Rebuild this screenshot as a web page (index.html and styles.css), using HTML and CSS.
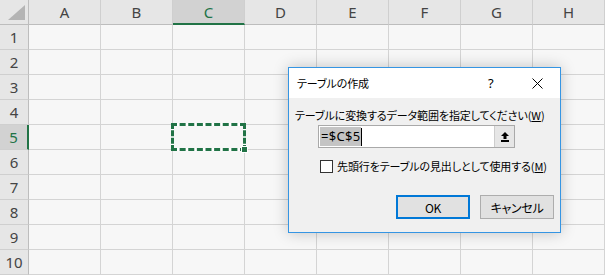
FILE: index.html
```html
<!DOCTYPE html>
<html lang="ja">
<head>
    <meta charset="UTF-8">
    <title>テーブルの作成</title>
    <link rel="stylesheet" href="styles.css">
</head>
<body>
    <div class="sheet">
        <div class="corner"><span class="corner-tri"></span></div>
        <div class="col-head">A</div>
        <div class="col-head">B</div>
        <div class="col-head active">C</div>
        <div class="col-head">D</div>
        <div class="col-head">E</div>
        <div class="col-head">F</div>
        <div class="col-head">G</div>
        <div class="col-head">H</div>

        <div class="row-head">1</div><div class="cell"></div><div class="cell"></div><div class="cell"></div><div class="cell"></div><div class="cell"></div><div class="cell"></div><div class="cell"></div><div class="cell"></div>
        <div class="row-head">2</div><div class="cell"></div><div class="cell"></div><div class="cell"></div><div class="cell"></div><div class="cell"></div><div class="cell"></div><div class="cell"></div><div class="cell"></div>
        <div class="row-head">3</div><div class="cell"></div><div class="cell"></div><div class="cell"></div><div class="cell"></div><div class="cell"></div><div class="cell"></div><div class="cell"></div><div class="cell"></div>
        <div class="row-head">4</div><div class="cell"></div><div class="cell"></div><div class="cell"></div><div class="cell"></div><div class="cell"></div><div class="cell"></div><div class="cell"></div><div class="cell"></div>
        <div class="row-head active">5</div><div class="cell"></div><div class="cell"></div>
        <div class="cell selected">
            <div class="marquee"><div class="marquee-inner"></div></div>
            <span class="handle"></span>
        </div>
        <div class="cell"></div><div class="cell"></div><div class="cell"></div><div class="cell"></div><div class="cell"></div>
        <div class="row-head">6</div><div class="cell"></div><div class="cell"></div><div class="cell"></div><div class="cell"></div><div class="cell"></div><div class="cell"></div><div class="cell"></div><div class="cell"></div>
        <div class="row-head">7</div><div class="cell"></div><div class="cell"></div><div class="cell"></div><div class="cell"></div><div class="cell"></div><div class="cell"></div><div class="cell"></div><div class="cell"></div>
        <div class="row-head">8</div><div class="cell"></div><div class="cell"></div><div class="cell"></div><div class="cell"></div><div class="cell"></div><div class="cell"></div><div class="cell"></div><div class="cell"></div>
        <div class="row-head">9</div><div class="cell"></div><div class="cell"></div><div class="cell"></div><div class="cell"></div><div class="cell"></div><div class="cell"></div><div class="cell"></div><div class="cell"></div>
        <div class="row-head">10</div><div class="cell"></div><div class="cell"></div><div class="cell"></div><div class="cell"></div><div class="cell"></div><div class="cell"></div><div class="cell"></div><div class="cell"></div>
    </div>

    <div class="dialog">
        <div class="dialog-title">
            <span class="title-text">テーブルの作成</span>
            <span class="title-help">?</span>
            <span class="title-close">
                <svg width="11" height="11" viewBox="0 0 11 11">
                    <path d="M0.5 0.5 L10.5 10.5 M10.5 0.5 L0.5 10.5" stroke="#000" stroke-width="1" fill="none"/>
                </svg>
            </span>
        </div>
        <div class="dialog-body">
            <div class="prompt">テーブルに変換するデータ範囲を指定してください(<u>W</u>)</div>
            <div class="range-box">
                <div class="range-input"><span class="range-sel">=$C$5</span><span class="caret"></span></div>
                <div class="range-btn">
                    <svg width="8" height="10" viewBox="0 0 8 10">
                        <path d="M4 0 L8 4 L5.5 4 L5.5 7 L2.5 7 L2.5 4 L0 4 Z" fill="#000"/>
                        <rect x="0" y="8" width="8" height="2" fill="#000"/>
                    </svg>
                </div>
            </div>
            <label class="check-row">
                <span class="checkbox"></span>
                <span>先頭行をテーブルの見出しとして使用する(<u>M</u>)</span>
            </label>
            <div class="buttons">
                <button class="btn primary">OK</button>
                <button class="btn">キャンセル</button>
            </div>
        </div>
    </div>
</body>
</html>
```

FILE: styles.css
```css
body {
    margin: 0;
    background: #f7f7f7;
    font-family: "Noto Sans", "Liberation Sans", sans-serif;
    overflow: hidden;
}

.sheet {
    display: grid;
    grid-template-columns: 29px repeat(8, 72px);
    grid-template-rows: 25px repeat(10, 25px);
    width: 605px;
}

.sheet > div {
    box-sizing: border-box;
}

.corner {
    background: #e6e6e6;
    border-right: 1px solid #bdbdbd;
    border-bottom: 1px solid #bdbdbd;
    position: relative;
}

.corner-tri {
    position: absolute;
    left: 8px;
    top: 5px;
    width: 17px;
    height: 15px;
    background: #b4b4b4;
    clip-path: polygon(100% 0, 100% 100%, 0 100%);
}

.col-head {
    background: #e6e6e6;
    border-right: 1px solid #cfcfcf;
    border-bottom: 1px solid #bdbdbd;
    color: #444;
    font-size: 15px;
    display: flex;
    align-items: center;
    justify-content: center;
}

.col-head.active {
    background: #d2d2d2;
    color: #217346;
    border-bottom: 2px solid #217346;
}

.row-head {
    background: #e6e6e6;
    border-right: 1px solid #bdbdbd;
    border-bottom: 1px solid #cfcfcf;
    color: #444;
    font-size: 15px;
    display: flex;
    align-items: center;
    justify-content: center;
}

.row-head.active {
    background: #d2d2d2;
    color: #217346;
    border-right: 2px solid #217346;
}

.cell {
    border-right: 1px solid #d4d4d4;
    border-bottom: 1px solid #d4d4d4;
}

.cell.selected {
    position: relative;
}

.marquee {
    position: absolute;
    left: -2px;
    top: -2px;
    right: -2px;
    bottom: -2px;
    border: 3px dashed #217346;
    background: #fff;
}

.marquee-inner {
    width: 100%;
    height: 100%;
    background: #f7f7f7;
}

.handle {
    position: absolute;
    right: -4px;
    bottom: -4px;
    width: 5px;
    height: 5px;
    background: #217346;
    border: 1px solid #fff;
}

.dialog {
    position: absolute;
    left: 288px;
    top: 67px;
    width: 273px;
    height: 166px;
    box-sizing: border-box;
    border: 1px solid #3595e3;
    background: #f0f0f0;
    box-shadow: 0 0 14px rgba(0, 0, 0, 0.22);
    font-family: "Noto Sans CJK JP", "Noto Sans", sans-serif;
    font-size: 11px;
    letter-spacing: -0.1px;
    font-feature-settings: "palt";
    color: #000;
    display: flex;
    flex-direction: column;
    white-space: nowrap;
}

.dialog-title {
    height: 30px;
    background: #fff;
    display: flex;
    align-items: center;
    padding-left: 8px;
}

.title-text {
    flex: 1;
}

.title-help {
    width: 14px;
    margin-right: 30px;
    font-family: "Noto Sans", sans-serif;
    font-size: 13px;
}

.title-close {
    width: 11px;
    height: 11px;
    margin-right: 17px;
    display: flex;
}

.dialog-body {
    flex: 1;
    padding: 10px 0 0 6px;
    display: flex;
    flex-direction: column;
}

.prompt {
    line-height: 14px;
}

.range-box {
    margin: 3px 0 0 23px;
    width: 197px;
    height: 23px;
    box-sizing: border-box;
    border: 1px solid #a9a9a9;
    background: #fff;
    display: flex;
}

.range-input {
    flex: 1;
    display: flex;
    align-items: center;
    padding-left: 1px;
}

.range-sel {
    background: #c4c4c4;
    font-family: "Noto Sans", sans-serif;
    font-size: 13px;
    letter-spacing: 0.3px;
    line-height: 19px;
    padding: 0 1px;
    font-feature-settings: normal;
}

.caret {
    width: 1px;
    height: 18px;
    background: #000;
}

.range-btn {
    width: 19px;
    background: #e6e6e6;
    border-left: 1px solid #cdcdcd;
    display: flex;
    align-items: center;
    justify-content: center;
}

.check-row {
    display: flex;
    align-items: center;
    margin: 11px 0 0 25px;
    gap: 4px;
    line-height: 14px;
}

.checkbox {
    width: 13px;
    height: 13px;
    box-sizing: border-box;
    border: 1px solid #333;
    background: #fff;
}

.buttons {
    display: flex;
    justify-content: flex-end;
    gap: 10px;
    margin: 22px 6px 0 0;
}

.btn {
    width: 74px;
    height: 24px;
    box-sizing: border-box;
    background: #e1e1e1;
    border: 1px solid #adadad;
    font-family: "Noto Sans CJK JP", "Noto Sans", sans-serif;
    font-size: 12px;
    letter-spacing: -0.3px;
    font-feature-settings: "palt";
    padding: 0;
    color: #000;
}

.btn.primary {
    border: 2px solid #0078d7;
}
```
